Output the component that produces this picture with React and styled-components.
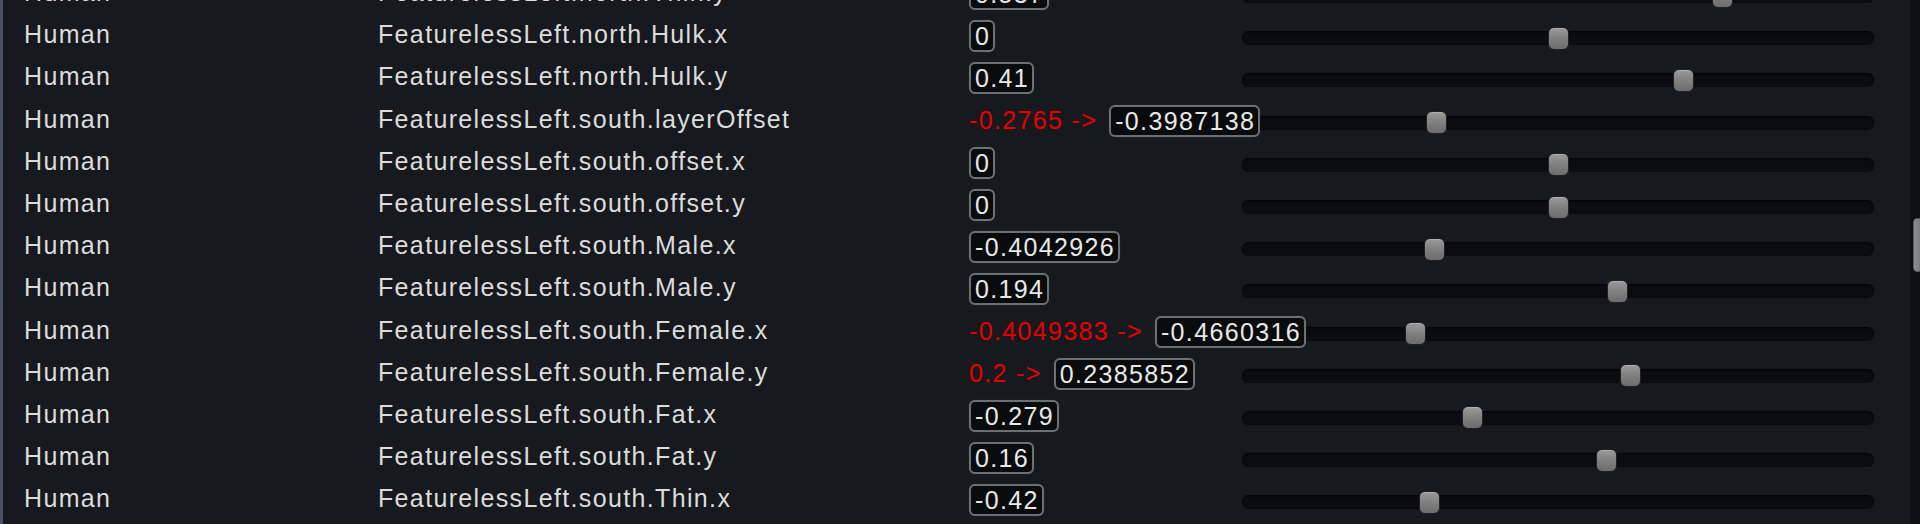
import React from 'react';
import styled, { createGlobalStyle } from 'styled-components';

const GlobalStyle = createGlobalStyle`
  html, body {
    margin: 0;
    padding: 0;
    height: 524px;
    overflow: hidden;
    background: #17191e;
  }
  #root {
    height: 100%;
  }
`;

const Window = styled.div`
  display: flex;
  height: 524px;
  border-left: 3px solid #4a5161;
  background: #17191e;
  font-family: 'Liberation Sans', Arial, sans-serif;
  font-size: 25px;
  letter-spacing: 1.35px;
  color: #dcdcdc;
  overflow: hidden;
`;

const List = styled.div`
  flex: 1;
  margin-top: -29px;
`;

const Row = styled.div`
  display: grid;
  grid-template-columns: 354px 592px 272px 632px;
  align-items: center;
  height: 42.2px;
  padding-left: 21px;
  white-space: nowrap;
`;

const Cell = styled.div`
  line-height: 28px;
`;

const ValueCell = styled.div`
  position: relative;
  z-index: 1;
  display: flex;
  align-items: center;
  padding-top: 4px;
  margin-left: -1px;
`;

const OldValue = styled.span`
  color: #e80000;
  margin-right: 12px;
`;

const ValueBox = styled.span`
  display: inline-block;
  height: 32px;
  line-height: 29px;
  box-sizing: border-box;
  padding: 0 3px 0 4px;
  border: 2px solid #6e6f73;
  border-radius: 6px;
  background: #0a0b0d;
  color: #e8e8e8;
  box-shadow: 0 0 1px rgba(255, 255, 255, 0.2);
`;

const SliderCell = styled.div`
  position: relative;
  height: 21px;
  margin-top: 8px;
`;

const Track = styled.div`
  position: absolute;
  left: 0;
  right: 0;
  top: 50%;
  height: 14px;
  transform: translateY(-50%);
  border-radius: 7px;
  background: #0b0c0f;
  box-shadow: inset 0 1px 2px rgba(0, 0, 0, 0.7), 0 0 1px rgba(0, 0, 0, 0.5);
`;

const Thumb = styled.div`
  position: absolute;
  top: -1px;
  width: 21px;
  height: 23px;
  box-sizing: border-box;
  border-radius: 6px;
  border: 1px solid #202124;
  background: linear-gradient(#9b9b9c, #828283 45%, #6c6c6d);
  box-shadow: inset 0 1px 0 rgba(255, 255, 255, 0.2);
`;

const ScrollStrip = styled.div`
  position: relative;
  width: 10px;
  background: #0e0f12;
`;

const ScrollThumb = styled.div`
  position: absolute;
  left: 3px;
  right: -3px;
  top: 218px;
  height: 54px;
  border-radius: 4px;
  background: linear-gradient(90deg, #8c8e92, #74767a);
  border: 1px solid #5a5c60;
  box-sizing: border-box;
`;

const rows = [
  { name: 'FeaturelessLeft.north.Thin.y', value: '0.537' },
  { name: 'FeaturelessLeft.north.Hulk.x', value: '0' },
  { name: 'FeaturelessLeft.north.Hulk.y', value: '0.41' },
  { name: 'FeaturelessLeft.south.layerOffset', old: '-0.2765', value: '-0.3987138' },
  { name: 'FeaturelessLeft.south.offset.x', value: '0' },
  { name: 'FeaturelessLeft.south.offset.y', value: '0' },
  { name: 'FeaturelessLeft.south.Male.x', value: '-0.4042926' },
  { name: 'FeaturelessLeft.south.Male.y', value: '0.194' },
  { name: 'FeaturelessLeft.south.Female.x', old: '-0.4049383', value: '-0.4660316' },
  { name: 'FeaturelessLeft.south.Female.y', old: '0.2', value: '0.2385852' },
  { name: 'FeaturelessLeft.south.Fat.x', value: '-0.279' },
  { name: 'FeaturelessLeft.south.Fat.y', value: '0.16' },
  { name: 'FeaturelessLeft.south.Thin.x', value: '-0.42' },
  { name: 'FeaturelessLeft.south.Thin.y', value: '0.3' },
];

// slider range is -1..1, thumb travels inside the track
const Slider = ({ value }) => {
  const t = (parseFloat(value) + 1) / 2;
  return (
    <SliderCell>
      <Track />
      <Thumb style={{ left: `calc(${t} * (100% - 21px))` }} />
    </SliderCell>
  );
};

export default function App() {
  return (
    <>
      <GlobalStyle />
      <Window>
        <List>
          {rows.map((r, i) => (
            <Row key={i}>
              <Cell>Human</Cell>
              <Cell>{r.name}</Cell>
              <ValueCell>
                {r.old && <OldValue>{r.old} -&gt;</OldValue>}
                <ValueBox>{r.value}</ValueBox>
              </ValueCell>
              <Slider value={r.value} />
            </Row>
          ))}
        </List>
        <ScrollStrip>
          <ScrollThumb />
        </ScrollStrip>
      </Window>
    </>
  );
}
